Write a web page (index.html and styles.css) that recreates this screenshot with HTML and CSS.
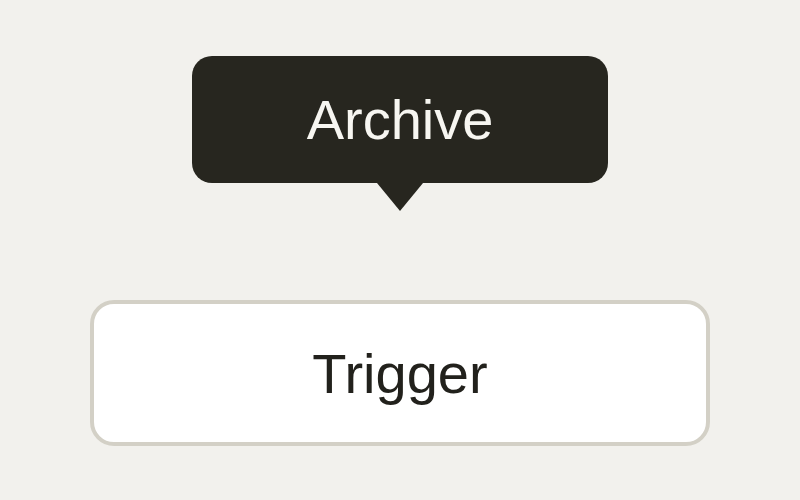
FILE: index.html
```html
<!DOCTYPE html>
<html>
<head>
<meta charset="utf-8">
<link rel="stylesheet" href="styles.css">
</head>
<body>
<main class="stage">
  <div class="tooltip" role="tooltip">Archive</div>
  <button class="trigger" type="button">Trigger</button>
</main>
</body>
</html>
```
FILE: styles.css
```css
html, body {
  margin: 0;
  padding: 0;
  height: 100%;
}
body {
  background: #f2f1ed;
  font-family: "Liberation Sans", Arial, sans-serif;
}
.stage {
  height: 500px;
  box-sizing: border-box;
  padding-top: 56px;
  display: flex;
  flex-direction: column;
  align-items: center;
  gap: 117px;
}
.tooltip {
  position: relative;
  width: 416px;
  height: 127px;
  box-sizing: border-box;
  background: #27261f;
  color: #f7f6f1;
  border-radius: 20px;
  font-size: 56px;
  line-height: 1;
  display: flex;
  align-items: center;
  justify-content: center;
}
.tooltip::after {
  content: "";
  position: absolute;
  left: 50%;
  top: 100%;
  margin-left: -23px;
  border-left: 23px solid transparent;
  border-right: 23px solid transparent;
  border-top: 28px solid #27261f;
}
.trigger {
  width: 620px;
  height: 146px;
  box-sizing: border-box;
  background: #ffffff;
  border: 4px solid #d3d0c6;
  border-radius: 24px;
  color: #22211c;
  font-family: "Liberation Sans", Arial, sans-serif;
  font-size: 56px;
  line-height: 1;
  padding: 2px 0 0 0;
  margin: 0;
}
```
